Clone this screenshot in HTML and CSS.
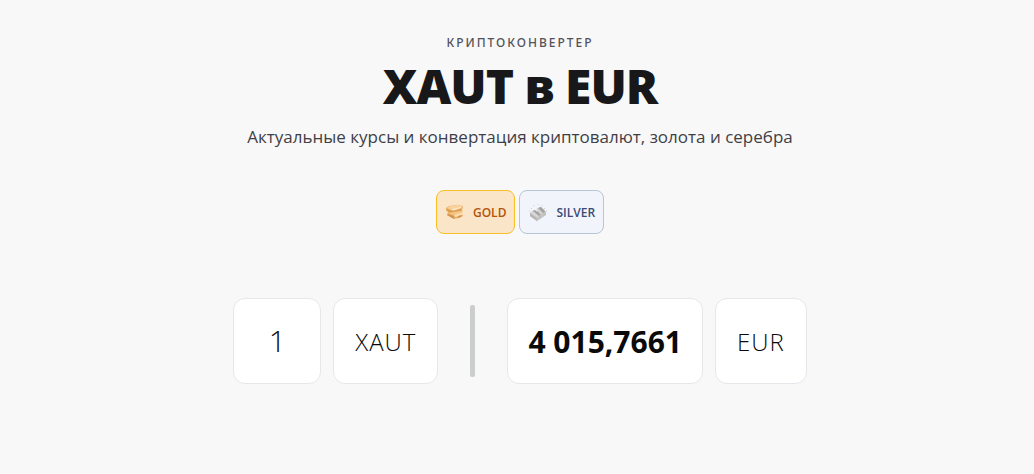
FILE: index.html
```html
<!DOCTYPE html>
<html lang="ru">
<head>
<meta charset="utf-8">
<meta name="viewport" content="width=device-width, initial-scale=1">
<title>XAUT в EUR</title>
<link rel="stylesheet" href="styles.css">
</head>
<body>
<main class="page">
  <header class="hero">
    <p class="eyebrow">Криптоконвертер</p>
    <h1 class="title">XAUT в EUR</h1>
    <p class="subtitle">Актуальные курсы и конвертация криптовалют, золота и серебра</p>
  </header>
  <nav class="metals">
    <a class="metal metal-gold" href="#gold">
      <svg class="metal-icon" viewBox="0 0 20 20" aria-hidden="true">
        <path fill="#eab069" d="M1 6l3-2 9-1 5 1-1 5 1 5-4 2-5 1-7-4 1-3-2-2z"/>
        <path fill="#f9d199" d="M2 6l3-2 8-1 4 1-3 2-7 2z"/>
        <path fill="#fce8c8" d="M7 7l5-1 5-2-1 2-8 3z"/>
        <path fill="#dc9d52" d="M1 7l6 2 9-2v2l-10 2-4-2z"/>
        <path fill="#f7c683" d="M3 11l12-2 3 1-5 2-5 1z"/>
        <path fill="#fbdcae" d="M9 13l9-3v3l-8 2z"/>
        <path fill="#d39450" d="M3 12l6 2v3l-7-4zM13 14l4-1-1 2-3 1z"/>
      </svg>
      GOLD
    </a>
    <a class="metal metal-silver" href="#silver">
      <svg class="metal-icon" viewBox="0 0 20 20" aria-hidden="true">
        <path fill="#c1c0c0" d="M2 11l4-3 3 2 1-4 3-1 5 5v3l-9 6-7-5z"/>
        <path fill="#d8d7d6" d="M2 11l3-2 6 5-2 2zM8 7l2-1 5 5-2 1z"/>
        <path fill="#a5a4a5" d="M5 9l2-1 5 4-1 2zM10 6l3-1 4 4-2 2z"/>
        <path fill="#b7b5b5" d="M2 11l7 5v3l-7-5z"/>
        <path fill="#c9c8c7" d="M9 16l2-2v3l-2 2zM13 12l2-1v3l-2 1z"/>
        <path fill="none" stroke="#cfcfd0" d="M10 2v1M6 3v1M14 3v1M3 6l1 1M17 6l-1 1M1 9h1M18 9h1"/>
      </svg>
      SILVER
    </a>
  </nav>
  <form class="converter">
    <div class="pair">
      <input class="box amount" type="text" inputmode="decimal" value="1" aria-label="Сумма">
      <button class="box code" type="button">XAUT</button>
    </div>
    <div class="divider"></div>
    <div class="pair">
      <output class="box result">4 015,7661</output>
      <button class="box code" type="button">EUR</button>
    </div>
  </form>
</main>
</body>
</html>
```
FILE: styles.css
```css
* {
  box-sizing: border-box;
}

body {
  margin: 0;
  background: #f8f8f8;
  color: #18181b;
  font-family: "Segoe UI", "Open Sans", "Noto Sans", sans-serif;
}

.page {
  display: flex;
  flex-direction: column;
  align-items: center;
  padding: 34px 0 32px 6px;
}

.hero {
  text-align: center;
}

.eyebrow {
  margin: 0;
  color: #52525b;
  font-family: "Noto Sans", sans-serif;
  font-size: 12px;
  font-weight: 500;
  line-height: 18px;
  letter-spacing: 2px;
  text-transform: uppercase;
}

.title {
  margin: 8px 0 16px;
  color: #18181a;
  font-size: 48px;
  font-weight: 800;
  line-height: 52px;
  letter-spacing: -1px;
}

.subtitle {
  margin: 0;
  color: #3f3f46;
  font-size: 17px;
  line-height: 18px;
}

.metals {
  display: flex;
  gap: 4px;
  margin-top: 44px;
}

.metal {
  display: flex;
  align-items: center;
  gap: 8px;
  height: 44px;
  padding: 0 8px;
  border: 1px solid;
  border-radius: 8px;
  font-size: 12px;
  font-weight: 600;
  text-decoration: none;
}

.metal-gold {
  border-color: #fbbf24;
  background: #fae5c8;
  color: #b45309;
}

.metal-silver {
  border-color: #b6c5d8;
  background: #f1f5fb;
  color: #3c4b78;
}

.metal-icon {
  width: 20px;
  height: 20px;
}

.converter {
  display: flex;
  align-items: center;
  gap: 32px;
  margin-top: 64px;
}

.pair {
  display: flex;
  gap: 12px;
}

.box {
  height: 86px;
  padding: 0 20px;
  border: 1px solid #e5e7eb;
  border-radius: 12px;
  background: #fff;
  color: #0a0a0a;
  font-family: inherit;
  font-size: 30px;
  line-height: 86px;
  text-align: center;
}

.amount {
  width: 88px;
  font-weight: 300;
}

.code {
  padding: 0 21px;
  font-size: 24px;
  font-weight: 300;
  letter-spacing: 1px;
}

.result {
  font-weight: 700;
}

.divider {
  width: 5px;
  height: 72px;
  border-radius: 2px;
  background: #cccecd;
}
```
